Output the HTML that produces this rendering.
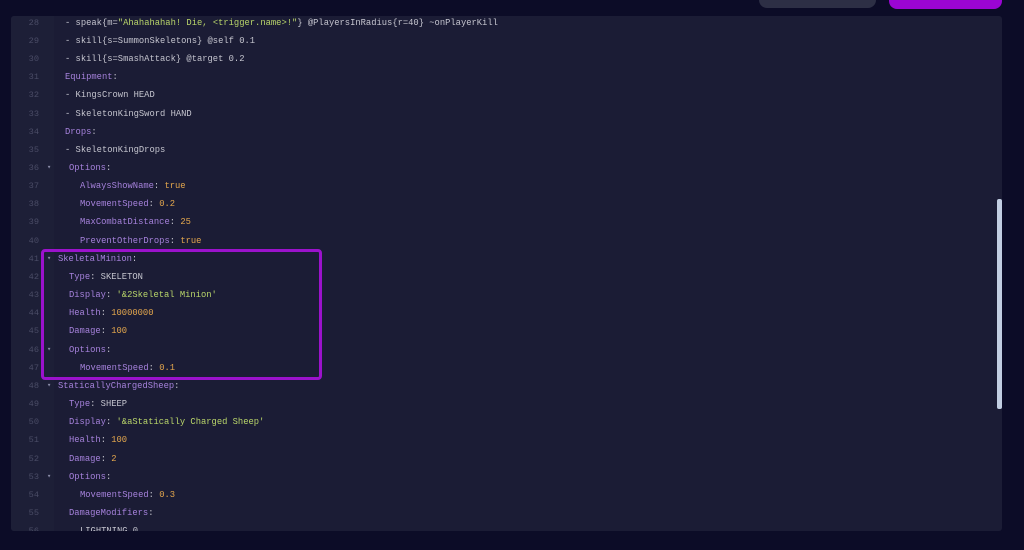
<!DOCTYPE html>
<html><head><meta charset="utf-8"><style>
*{margin:0;padding:0;box-sizing:border-box}
body{width:1024px;height:550px;background:#0c0c27;overflow:hidden;position:relative;font-family:"Liberation Mono",monospace}
.btn1{position:absolute;left:759px;top:-10px;width:117px;height:18px;background:#2d2f45;border-radius:8px}
.btn2{position:absolute;left:889px;top:-10px;width:113px;height:19px;background:#9b05d3;border-radius:8px}
.panel{position:absolute;left:11px;top:16px;width:991px;height:515px;background:#1b1c35;border-radius:3px;overflow:hidden}
.gut{position:absolute;left:0;top:0;width:43px;height:100%;background:#1d1f37}
.ln{position:absolute;left:0;height:18px;width:100%;font-size:8.8px;line-height:18px;white-space:pre;color:#c4c4ce}
.n{position:absolute;left:0;width:28px;text-align:right;color:#4a4c66;font-size:8.6px}
.f{position:absolute;left:36px;color:#8a8ca8;font-size:7px}
.c{position:absolute;left:47px}
.a{position:absolute;left:54px}
.b{position:absolute;left:58px}
.d{position:absolute;left:69px}
.k{color:#a682dc}.s{color:#b9d56a}.v{color:#e3a64d}
.box{position:absolute;left:41px;top:249px;width:281px;height:131px;border:3px solid #9b12cc;border-radius:4px}
.sb{position:absolute;left:997px;top:199px;width:5px;height:210px;background:#c2cee2;border-radius:2px}
</style></head><body>
<div class="btn1"></div><div class="btn2"></div>
<div class="panel"><div class="gut"></div>
<div class="ln" style="top:-2px"><span class="n">28</span><span class="a">- speak{m=<span class="s">"Ahahahahah! Die, &lt;trigger.name&gt;!"</span>} @PlayersInRadius{r=40} ~onPlayerKill</span></div>
<div class="ln" style="top:16px"><span class="n">29</span><span class="a">- skill{s=SummonSkeletons} @self 0.1</span></div>
<div class="ln" style="top:34px"><span class="n">30</span><span class="a">- skill{s=SmashAttack} @target 0.2</span></div>
<div class="ln" style="top:52px"><span class="n">31</span><span class="a"><span class="k">Equipment</span>:</span></div>
<div class="ln" style="top:70px"><span class="n">32</span><span class="a">- KingsCrown HEAD</span></div>
<div class="ln" style="top:89px"><span class="n">33</span><span class="a">- SkeletonKingSword HAND</span></div>
<div class="ln" style="top:107px"><span class="n">34</span><span class="a"><span class="k">Drops</span>:</span></div>
<div class="ln" style="top:125px"><span class="n">35</span><span class="a">- SkeletonKingDrops</span></div>
<div class="ln" style="top:143px"><span class="n">36</span><span class="f">▾</span><span class="b"><span class="k">Options</span>:</span></div>
<div class="ln" style="top:161px"><span class="n">37</span><span class="d"><span class="k">AlwaysShowName</span>: <span class="v">true</span></span></div>
<div class="ln" style="top:179px"><span class="n">38</span><span class="d"><span class="k">MovementSpeed</span>: <span class="v">0.2</span></span></div>
<div class="ln" style="top:197px"><span class="n">39</span><span class="d"><span class="k">MaxCombatDistance</span>: <span class="v">25</span></span></div>
<div class="ln" style="top:216px"><span class="n">40</span><span class="d"><span class="k">PreventOtherDrops</span>: <span class="v">true</span></span></div>
<div class="ln" style="top:234px"><span class="n">41</span><span class="f">▾</span><span class="c"><span class="k">SkeletalMinion</span>:</span></div>
<div class="ln" style="top:252px"><span class="n">42</span><span class="b"><span class="k">Type</span>: SKELETON</span></div>
<div class="ln" style="top:270px"><span class="n">43</span><span class="b"><span class="k">Display</span>: <span class="s">'&amp;2Skeletal Minion'</span></span></div>
<div class="ln" style="top:288px"><span class="n">44</span><span class="b"><span class="k">Health</span>: <span class="v">10000000</span></span></div>
<div class="ln" style="top:306px"><span class="n">45</span><span class="b"><span class="k">Damage</span>: <span class="v">100</span></span></div>
<div class="ln" style="top:325px"><span class="n">46</span><span class="f">▾</span><span class="b"><span class="k">Options</span>:</span></div>
<div class="ln" style="top:343px"><span class="n">47</span><span class="d"><span class="k">MovementSpeed</span>: <span class="v">0.1</span></span></div>
<div class="ln" style="top:361px"><span class="n">48</span><span class="f">▾</span><span class="c"><span class="k">StaticallyChargedSheep</span>:</span></div>
<div class="ln" style="top:379px"><span class="n">49</span><span class="b"><span class="k">Type</span>: SHEEP</span></div>
<div class="ln" style="top:397px"><span class="n">50</span><span class="b"><span class="k">Display</span>: <span class="s">'&amp;aStatically Charged Sheep'</span></span></div>
<div class="ln" style="top:415px"><span class="n">51</span><span class="b"><span class="k">Health</span>: <span class="v">100</span></span></div>
<div class="ln" style="top:434px"><span class="n">52</span><span class="b"><span class="k">Damage</span>: <span class="v">2</span></span></div>
<div class="ln" style="top:452px"><span class="n">53</span><span class="f">▾</span><span class="b"><span class="k">Options</span>:</span></div>
<div class="ln" style="top:470px"><span class="n">54</span><span class="d"><span class="k">MovementSpeed</span>: <span class="v">0.3</span></span></div>
<div class="ln" style="top:488px"><span class="n">55</span><span class="b"><span class="k">DamageModifiers</span>:</span></div>
<div class="ln" style="top:506px"><span class="n">56</span><span class="d">LIGHTNING 0</span></div>
</div>
<div class="box"></div>
<div class="sb"></div>
</body></html>
